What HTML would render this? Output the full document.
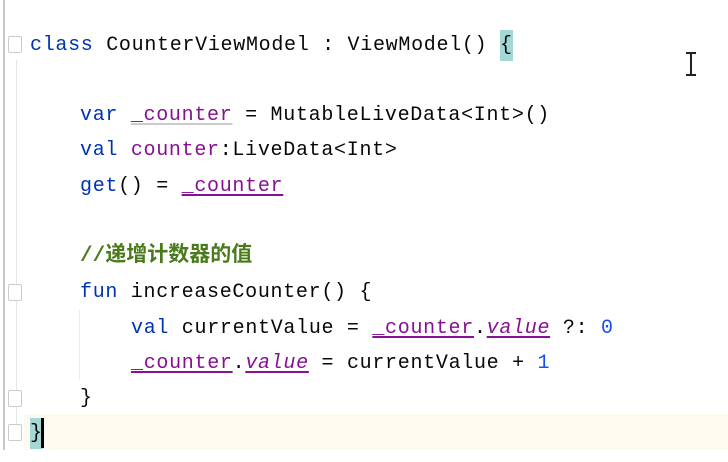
<!DOCTYPE html>
<html><head><meta charset="utf-8"><style>
html,body{margin:0;padding:0;background:#fff;width:728px;height:462px;overflow:hidden;position:relative}
.g{position:absolute;left:3px;top:0;width:2px;height:450px;background:#c8c8c8}
.g2{position:absolute;left:16px;top:60px;width:1px;height:370px;background:#e4e4e4}
.hl{position:absolute;left:24px;top:414px;width:704px;height:36px;background:#fdfaef}
.l{position:absolute;font-family:"Liberation Mono","Noto Sans CJK SC",monospace;font-size:20px;letter-spacing:0.7px;color:#080808;white-space:pre;line-height:24px}
.k{color:#0033b3}.p{color:#871094}.n{color:#1750eb}
.u{text-decoration:underline;text-underline-offset:3px;text-decoration-thickness:1.5px}
.i{font-style:italic}
.c{color:#4a7a1c;font-weight:bold;font-family:"Liberation Mono","Noto Sans CJK SC",sans-serif}
.b{background:#a3d8d7;padding:4px 0}
.f{position:absolute;left:8px;width:12px;height:15px;border:1px solid #ccc;border-radius:2px;background:#fff}
.vl{position:absolute;left:79px;top:310px;width:1px;height:70px;background:#ececec}
</style></head><body>
<div class="g"></div><div class="g2"></div>
<div class="hl"></div>
<div class="vl"></div>
<div class="f" style="top:36px"></div>
<div class="f" style="top:284px"></div>
<div class="f" style="top:390px"></div>
<div class="f" style="top:424px"></div>
<div class="l" style="left:30px;top:34px"><span class="k">class</span> CounterViewModel : ViewModel() <span class="b">{</span></div>
<div class="l" style="left:80px;top:104px"><span class="k">var</span> <span class="p u" style="text-decoration-color:#ccc">_counter</span> = MutableLiveData&lt;Int&gt;()</div>
<div class="l" style="left:80px;top:139px"><span class="k">val</span> <span class="p">counter</span>:LiveData&lt;Int&gt;</div>
<div class="l" style="left:80px;top:175px"><span class="k">get</span>() = <span class="p u">_counter</span></div>
<div class="l c" style="left:80px;top:245px;letter-spacing:0;font-size:21px">//递增计数器的值</div>
<div class="l" style="left:80px;top:281px"><span class="k">fun</span> increaseCounter() {</div>
<div class="l" style="left:131px;top:317px"><span class="k">val</span> currentValue = <span class="p u">_counter</span>.<span class="p u i">value</span> ?: <span class="n">0</span></div>
<div class="l" style="left:131px;top:352px"><span class="p u">_counter</span>.<span class="p u i">value</span> = currentValue + <span class="n">1</span></div>
<div class="l" style="left:80px;top:387px">}</div>
<div class="l" style="left:30px;top:422px"><span class="b">}</span></div>
<div style="position:absolute;left:41px;top:418px;width:3px;height:30px;background:#000"></div>
<div style="position:absolute;left:690px;top:52px;width:2px;height:24px;background:#222"></div>
<div style="position:absolute;left:686px;top:52px;width:10px;height:2px;background:#222"></div>
<div style="position:absolute;left:686px;top:74px;width:10px;height:2px;background:#222"></div>
</body></html>
